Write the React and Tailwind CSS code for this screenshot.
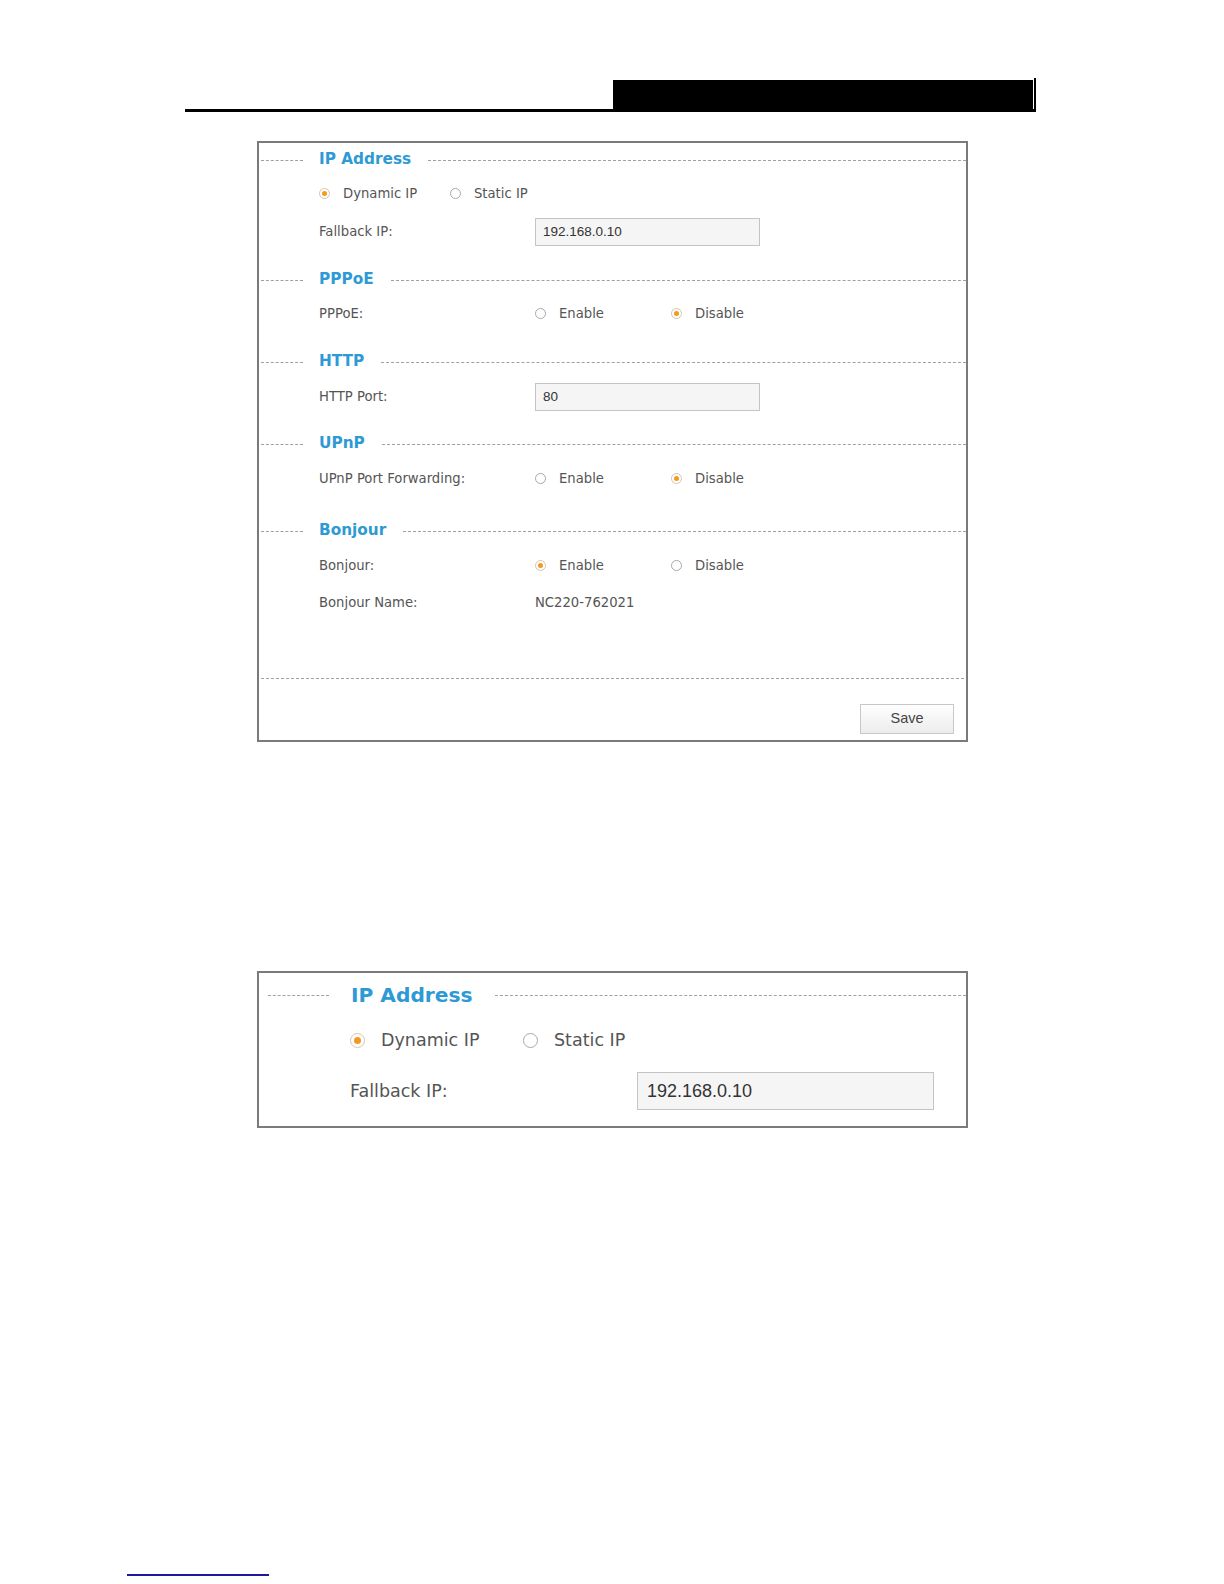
import React from 'react';

const labelFont = { fontFamily: '"DejaVu Sans", Verdana, sans-serif' };
const inputFont = { fontFamily: '"Liberation Sans", Arial, sans-serif' };

function Radio({ on, big }) {
    const size = big ? 'w-[15px] h-[15px]' : 'w-[11px] h-[11px]';
    const dot = big ? 'w-[7px] h-[7px]' : 'w-[5px] h-[5px]';
    return (
        <span className={`${size} shrink-0 rounded-full border flex items-center justify-center bg-white ${on ? 'border-[#d8c4a8]' : 'border-[#a8a8a8]'}`}>
            {on && <span className={`${dot} rounded-full bg-[#f39a1e]`} />}
        </span>
    );
}

function SectionHead({ title }) {
    return (
        <div className="h-[20px] flex items-center">
            <div className="w-[42px] ml-[2px] border-t border-dashed border-[#a0a0a0]" />
            <span className="ml-[16px] mr-[17px] text-[15.3px] font-bold text-[#2d9ad5] leading-none" style={labelFont}>{title}</span>
            <div className="flex-1 border-t border-dashed border-[#a0a0a0]" />
        </div>
    );
}

function Option({ on, label, width }) {
    return (
        <div className={`flex items-center ${width}`}>
            <Radio on={on} />
            <span className="ml-[13px]">{label}</span>
        </div>
    );
}

function Row({ label, children, className = '' }) {
    return (
        <div className={`h-[28px] flex items-center pl-[60px] ${className}`}>
            <span className="w-[216px] shrink-0">{label}</span>
            {children}
        </div>
    );
}

function TextBox({ value }) {
    return (
        <div className="w-[225px] h-[28px] border border-[#c4c4c4] bg-[#f5f5f5] flex items-center pl-[7px] text-[13.5px] text-[#333]" style={inputFont}>
            {value}
        </div>
    );
}

export default function App() {
    return (
        <div className="w-full h-[1584px] bg-white relative overflow-hidden">
            {/* page header */}
            <div className="pt-[78px] pl-[185px]">
                <div className="w-[851px] flex items-end">
                    <div className="flex-1" />
                    <div className="w-[420px] h-[29px] bg-black" />
                    <div className="w-[1px] h-[29px] bg-white" />
                    <div className="w-[2px] h-[31px] bg-black" />
                </div>
                <div className="w-[851px] h-[3px] bg-black" />
            </div>

            {/* main panel */}
            <div className="ml-[257px] mt-[29px] w-[711px] border-2 border-[#7b7b7b] text-[13.2px] text-[#555]" style={labelFont}>
                <div className="pt-[7px]">
                    <SectionHead title="IP Address" />
                    <div className="h-[28px] mt-[10px] flex items-center pl-[60px]">
                        <Option on label="Dynamic IP" width="w-[131px]" />
                        <Option label="Static IP" width="w-[131px]" />
                    </div>
                    <Row label="Fallback IP:" className="mt-[10px]">
                        <TextBox value="192.168.0.10" />
                    </Row>

                    <div className="mt-[24px]"><SectionHead title="PPPoE" /></div>
                    <Row label="PPPoE:" className="mt-[10px]">
                        <Option label="Enable" width="w-[136px]" />
                        <Option on label="Disable" width="w-[136px]" />
                    </Row>

                    <div className="mt-[24px]"><SectionHead title="HTTP" /></div>
                    <Row label="HTTP Port:" className="mt-[11px]">
                        <TextBox value="80" />
                    </Row>

                    <div className="mt-[23px]"><SectionHead title="UPnP" /></div>
                    <Row label="UPnP Port Forwarding:" className="mt-[11px]">
                        <Option label="Enable" width="w-[136px]" />
                        <Option on label="Disable" width="w-[136px]" />
                    </Row>

                    <div className="mt-[28px]"><SectionHead title="Bonjour" /></div>
                    <Row label="Bonjour:" className="mt-[11px]">
                        <Option on label="Enable" width="w-[136px]" />
                        <Option label="Disable" width="w-[136px]" />
                    </Row>
                    <Row label="Bonjour Name:" className="mt-[9px]">
                        <span>NC220-762021</span>
                    </Row>

                    <div className="mt-[61px] mx-[2px] border-t border-dashed border-[#a0a0a0]" />
                    <div className="flex justify-end pr-[12px] pt-[25px] pb-[6px]">
                        <button type="button" className="w-[94px] h-[30px] border border-[#c8c8c8] bg-gradient-to-b from-white to-[#ececec] text-[14.5px] text-[#444]" style={inputFont}>
                            Save
                        </button>
                    </div>
                </div>
            </div>

            {/* enlarged detail */}
            <div className="ml-[257px] mt-[229px] w-[711px] border-2 border-[#7b7b7b] text-[17.5px] text-[#555] pt-[8px] pb-[16px]" style={labelFont}>
                <div className="h-[28px] flex items-center">
                    <div className="w-[61px] ml-[9px] border-t border-dashed border-[#a0a0a0]" />
                    <span className="ml-[22px] mr-[22px] text-[20.2px] font-bold text-[#2d9ad5] leading-none">IP Address</span>
                    <div className="flex-1 border-t border-dashed border-[#a0a0a0]" />
                </div>
                <div className="h-[32px] mt-[15px] flex items-center pl-[91px]">
                    <div className="w-[173px] flex items-center">
                        <Radio on big />
                        <span className="ml-[16px]">Dynamic IP</span>
                    </div>
                    <div className="flex items-center">
                        <Radio big />
                        <span className="ml-[16px]">Static IP</span>
                    </div>
                </div>
                <div className="h-[38px] mt-[16px] flex items-center pl-[91px]">
                    <span className="w-[287px] shrink-0">Fallback IP:</span>
                    <div className="w-[297px] h-[38px] border border-[#c4c4c4] bg-[#f5f5f5] flex items-center pl-[9px] text-[18px] text-[#333]" style={inputFont}>
                        192.168.0.10
                    </div>
                </div>
            </div>

            {/* footer link line */}
            <div className="absolute left-[127px] top-[1574px] w-[142px] h-[2px] bg-[#1a1a9c]" />
        </div>
    );
}
